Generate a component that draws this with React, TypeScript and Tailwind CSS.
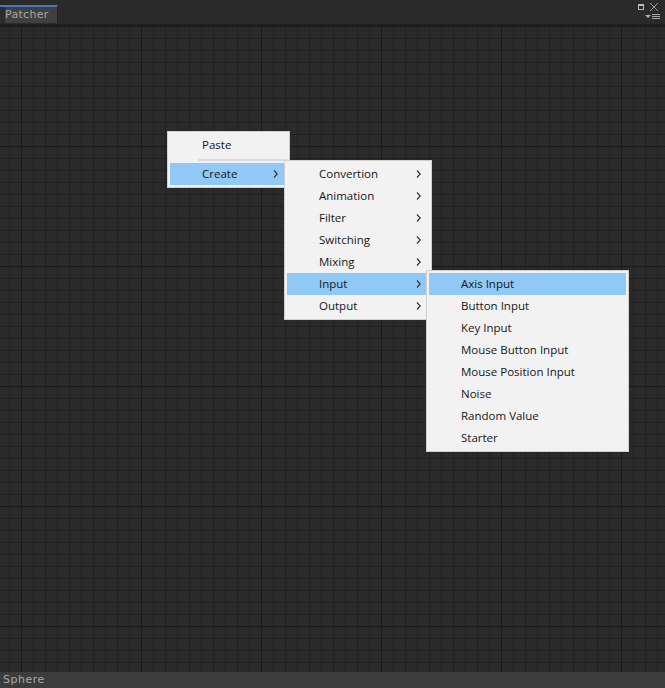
type Item = { label: string; arrow?: boolean; active?: boolean };

const createItems: Item[] = [
  { label: "Convertion", arrow: true },
  { label: "Animation", arrow: true },
  { label: "Filter", arrow: true },
  { label: "Switching", arrow: true },
  { label: "Mixing", arrow: true },
  { label: "Input", arrow: true, active: true },
  { label: "Output", arrow: true },
];

const inputItems: Item[] = [
  { label: "Axis Input", active: true },
  { label: "Button Input" },
  { label: "Key Input" },
  { label: "Mouse Button Input" },
  { label: "Mouse Position Input" },
  { label: "Noise" },
  { label: "Random Value" },
  { label: "Starter" },
];

function Chevron() {
  return (
    <svg viewBox="0 0 5 8" className="h-[8px] w-[5px]" fill="none" stroke="#333" strokeWidth="1.15">
      <path d="M1 .5L4.2 4L1 7.5" />
    </svg>
  );
}

function MenuRow({ item }: { item: Item }) {
  return (
    <div className={"flex h-[22px] items-center pl-[32px] pr-[8px] " + (item.active ? "bg-[#90c8f6]" : "")}>
      <span className="flex-1">{item.label}</span>
      {item.arrow && <Chevron />}
    </div>
  );
}

export default function App() {
  return (
    <div className="relative flex h-[688px] w-[665px] flex-col overflow-hidden bg-[#2a2a2a] font-['Open_Sans',sans-serif]">
      {/* tab strip */}
      <div className="flex h-[26px] shrink-0 justify-between border-b-2 border-[#1f1f1f] bg-[#2a2a2a] pt-[5px]">
        <div className="h-[18px] w-[58px] border-t-2 border-r border-t-[#3f79c2] border-r-[#222] bg-[linear-gradient(90deg,#2c2c2c_5px,#404040_5px)] pl-[5px] font-['DejaVu_Sans',sans-serif] text-[11px] leading-[16px] tracking-[0.3px] text-[#a8a8a8]">
          Patcher
        </div>
        <div className="-mt-[2px] flex w-[26px] flex-col items-end pr-[5px]">
          <div className="flex items-center gap-[6px] pr-[2px]">
            <div className="h-[6px] w-[6px] border border-t-2 border-[#b8b8b8]" />
            <svg viewBox="0 0 8 8" className="h-[8px] w-[8px]" stroke="#9a9a9a" strokeWidth="1">
              <path d="M0 0L8 8M8 0L0 8" />
            </svg>
          </div>
          <div className="mt-[3px] flex items-center gap-[1px]">
            <div className="h-0 w-0 border-x-[3px] border-t-[3px] border-x-transparent border-t-[#b0b0b0]" />
            <div className="flex flex-col gap-[1px]">
              <div className="h-px w-[8px] bg-[#a8a8a8]" />
              <div className="h-px w-[8px] bg-[#a8a8a8]" />
              <div className="h-px w-[8px] bg-[#a8a8a8]" />
            </div>
          </div>
        </div>
      </div>

      {/* patcher canvas */}
      <div className="flex-1 bg-[#2a2a2a] bg-[linear-gradient(#1a1a1a_1px,transparent_1px),linear-gradient(90deg,#1a1a1a_1px,transparent_1px),linear-gradient(#212121_1px,transparent_1px),linear-gradient(90deg,#212121_1px,transparent_1px)] bg-[size:120px_120px,120px_120px,12px_12px,12px_12px] bg-[position:21px_0px,21px_0px,9px_0px,9px_0px]" />

      {/* status bar */}
      <div className="h-[16px] shrink-0 bg-[#3c3c3c] pl-[3px] font-['DejaVu_Sans',sans-serif] text-[11px] leading-[16px] tracking-[0.5px] text-[#a8a8a8]">
        Sphere
      </div>

      {/* context menus */}
      <div className="absolute left-[167px] top-[131px] w-[123px] border border-[#d0d0d0] bg-[#f2f2f2] p-[2px] text-[11.5px] text-[#161616]">
        <div className="flex h-[22px] items-center pl-[32px]">Paste</div>
        <div className="ml-[28px] mt-[3px] mb-[2px] h-[2px] bg-[#dcdcdc]" />
        <div className="flex h-[22px] items-center bg-[#90c8f6] pl-[32px] pr-[9px]">
          <span className="flex-1">Create</span>
          <Chevron />
        </div>
      </div>
      <div className="absolute left-[284px] top-[160px] w-[148px] border border-[#d0d0d0] bg-[#f2f2f2] p-[2px] text-[11.5px] text-[#161616]">
        {createItems.map((item) => (
          <MenuRow key={item.label} item={item} />
        ))}
      </div>
      <div className="absolute left-[426px] top-[270px] w-[203px] border border-[#d0d0d0] bg-[#f2f2f2] p-[2px] text-[11.5px] text-[#161616]">
        {inputItems.map((item) => (
          <MenuRow key={item.label} item={item} />
        ))}
      </div>
    </div>
  );
}
